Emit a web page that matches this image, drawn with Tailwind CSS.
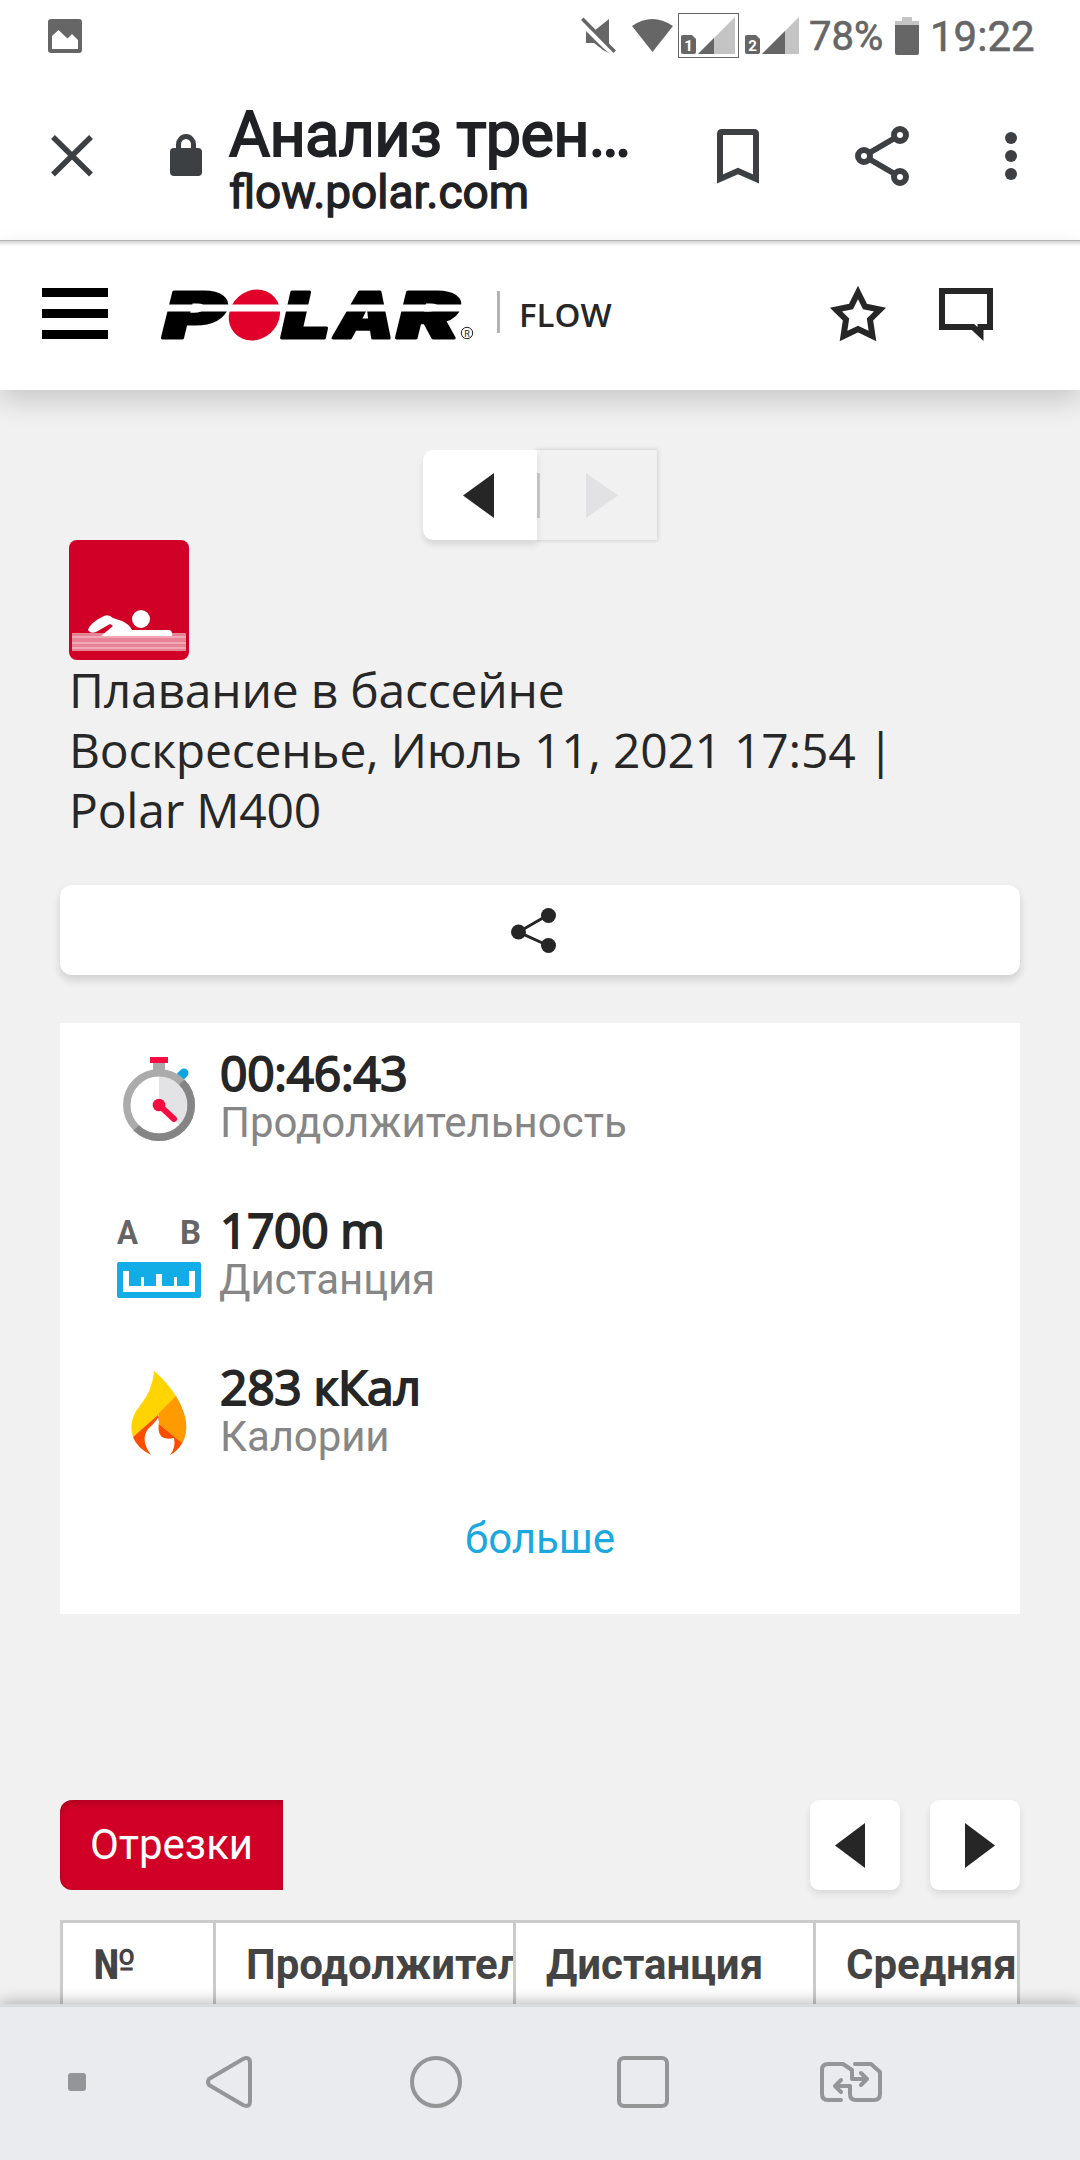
<!DOCTYPE html>
<html lang="ru">
<head>
<meta charset="utf-8">
<title>Анализ тренировки</title>
<script src="https://cdn.jsdelivr.net/npm/@tailwindcss/browser@4"></script>
</head>
<body class="bg-[#f1f1f1]">
<div class="flex h-[2160px] w-[1080px] flex-col overflow-hidden font-['Roboto',sans-serif]">

  <!-- Status bar -->
  <div class="flex h-[74px] shrink-0 items-center bg-white pl-12 text-[#666]">
    <svg class="h-[74px] w-[34px]" viewBox="48 0 34 74"><path fill="#666" fill-rule="evenodd" d="M51 19H79Q82 19 82 22V50Q82 53 79 53H51Q48 53 48 50V22Q48 19 51 19ZM52 36V49H78V40L72 34L67.500 38.500L58.500 30Z"/></svg>
    <svg class="ml-[498px] h-[74px] w-[222px]" viewBox="580 0 222 74">
      <g fill="#666">
        <path d="M609 19V46L594 31ZM586 31L602 47L609 53L603 50L594 43H586Z"/>
        <path d="M581 20L583.500 17.500L616 50.500L613.500 53Z"/>
        <path d="M632 26Q652 12 673 26L652.500 52Z"/>
        <rect x="678.500" y="13.500" width="60" height="44" fill="none" stroke="#666"/>
        <path d="M681 37Q681 35 683 35H692L696 39V52Q696 54 694 54H683Q681 54 681 52Z"/>
        <path d="M735 17V54H698Z" fill="#c4c4c4"/><path d="M698 54L714 38V54Z"/>
        <path d="M745 37Q745 35 747 35H756L760 39V52Q760 54 758 54H747Q745 54 745 52Z"/>
        <path d="M799 17V54H762Z" fill="#c4c4c4"/><path d="M762 54L785 31V54Z"/>
      </g>
      <g fill="#fff" font-family="Roboto" font-weight="700" font-size="15" text-anchor="middle"><text x="688.500" y="51">1</text><text x="752.500" y="51">2</text></g>
    </svg>
    <span class="ml-[7px] w-[79px] text-[40px] leading-[76px] [-webkit-text-stroke:0.6px]">78%</span>
    <svg class="ml-[7px] h-[74px] w-6" viewBox="895 0 24 74"><path fill="#c4c4c4" d="M902 17H912V21H919V26H895V21H902Z"/><path fill="#666" d="M895 25H919V53Q919 55 917 55H897Q895 55 895 53Z"/></svg>
    <span class="ml-[11px] text-[42px] leading-[76px] [-webkit-text-stroke:0.6px]">19:22</span>
  </div>

  <!-- Browser toolbar -->
  <div class="flex h-[166px] shrink-0 items-start bg-white pl-[51px] text-[#202124]">
    <svg class="h-[166px] w-[151px]" viewBox="51 74 151 166">
      <path d="M53 137L91 174.500M91 137L53 174.500" stroke="#3c4043" stroke-width="5.500" fill="none"/>
      <rect x="170" y="148" width="32" height="28" rx="4" fill="#3c4043"/><path d="M178.500 149V144.500A7.500 8 0 0 1 193.500 144.500V149" fill="none" stroke="#3c4043" stroke-width="5"/>
    </svg>
    <div class="ml-[27px] mt-[29px] w-[420px] [-webkit-text-stroke:1.8px]">
      <div class="text-[63px] leading-[64px] tracking-[-0.7px]">Анализ трен…</div>
      <div class="-mt-px text-[46px] leading-[52px] [-webkit-text-stroke:1.3px]">flow.polar.com</div>
    </div>
    <svg class="ml-[66px] h-[166px] w-[310px]" viewBox="715 74 310 166" fill="none" stroke="#3c4043">
      <path d="M720 179V134Q720 132 722 132H754Q756 132 756 134V179L738 171Z" stroke-width="6"/>
      <path d="M864 156L900 135M864 156L900 177" stroke-width="5.500"/>
      <g stroke-width="6" fill="#fff"><circle cx="864" cy="156" r="6"/><circle cx="900" cy="135" r="6"/><circle cx="900" cy="177" r="6"/></g>
      <g fill="#3c4043" stroke="none"><circle cx="1011" cy="138" r="6"/><circle cx="1011" cy="156" r="6"/><circle cx="1011" cy="174" r="6"/></g>
    </svg>
  </div>

  <!-- Site header -->
  <header class="relative flex h-[150px] shrink-0 items-center border-t border-[#b3b3b3] bg-white bg-linear-to-b from-[#d4d4d4] to-white to-[5px] pb-[4px] pl-[42px] shadow-[0_12px_24px_rgba(0,0,0,0.16)]">
    <svg class="h-[51px] w-[66px]" viewBox="0 0 66 51"><path d="M0 0H66V9H0ZM0 21H66V30H0ZM0 42H66V51H0Z"/></svg>
    <svg class="ml-[52px] h-[96px] w-[340px]" viewBox="160 266 340 96" role="img" aria-label="Polar">
      <g font-family="Inter" font-weight="900" font-style="italic" font-size="63" stroke="#000" stroke-width="3" stroke-linejoin="round">
        <text x="163" y="337.500" textLength="62" lengthAdjust="spacingAndGlyphs">P</text>
        <text x="282" y="337.500" textLength="48" lengthAdjust="spacingAndGlyphs">L</text>
        <text x="335" y="337.500" textLength="59" lengthAdjust="spacingAndGlyphs">A</text>
        <text x="397" y="337.500" textLength="62" lengthAdjust="spacingAndGlyphs">R</text>
      </g>
      <ellipse cx="254.500" cy="315" rx="25.500" ry="25.500" fill="#e0002a" transform="skewX(-6) translate(33 0)"/>
      <path fill="#fff" d="M160 304.500H475V311.500H160Z"/>
      <circle cx="467" cy="333" r="5.700" fill="none" stroke="#222"/>
      <text x="467" y="336.500" font-size="9" font-family="Roboto" text-anchor="middle" fill="#222">R</text>
      <path fill="#b3b3b3" d="M497 291H500V333H497Z"/>
    </svg>
    <span class="ml-[19px] w-[93px] pt-[3px] font-['Open_Sans'] text-[33px] font-semibold leading-[48px] text-[#272727]">FLOW</span>
    <svg class="ml-[215px] h-[60px] w-[168px]" viewBox="827 284 168 60" fill="none" stroke="#262626" stroke-width="6">
      <path d="M858 292.500L865 306.500L880 309.500L870 319.500L872.500 336L858 329L843.500 336L846 319.500L836 309.500L851 306.500Z"/>
      <path d="M942 291H990V327H980.500V334L973 327H942Z"/>
    </svg>
  </header>

  <!-- Page -->
  <main class="flex h-[1614px] shrink-0 flex-col overflow-hidden px-[60px] pt-[60px]">
    <div class="ml-[363px] flex h-[90px] w-[234px] shrink-0">
      <button class="relative z-10 flex w-[114px] items-center rounded-l-[10px] bg-white pl-10 shadow-[0_5px_6px_rgba(0,0,0,0.1)]"><svg class="h-[45px] w-[31px]" viewBox="0 0 31 45"><path fill="#262626" d="M0 22.500L31 0V45Z"/></svg></button>
      <button class="flex w-[120px] items-center bg-[#f1f1f1] shadow-[0_0_4px_1px_rgba(0,0,0,0.13)]"><span class="h-[45px] w-[3px] bg-[#c9c9c9]"></span><svg class="ml-[46px] h-[45px] w-[32px]" viewBox="0 0 32 45"><path fill="#e2e2e4" d="M0 0L32 22.500L0 45Z"/></svg></button>
    </div>

    <svg class="ml-[9px] h-[120px] w-[120px] shrink-0" viewBox="69 540 120 120">
      <rect x="69" y="540" width="120" height="120" rx="8" fill="#d10027"/>
      <path fill="#e78297" d="M72 633H186V651H72Z"/><path stroke="#f1b5c1" stroke-width="1.500" d="M72 637H186M72 643H186M72 648H186"/>
      <path fill="#fff" d="M88 630Q90 623 102 617Q108 613 113 618L122 621Q129 624 132 630H170Q173 632 172 636H101L113 626L110 624L96 632Q90 634 88 630Z"/>
      <ellipse cx="141" cy="619" rx="9" ry="9" fill="#fff"/>
    </svg>
    <h1 class="ml-[9px] font-['Open_Sans','Noto_Sans',sans-serif] text-[48px] leading-[60px] tracking-[-0.22px] text-[#272727]">Плавание в бассейне<br>Воскресенье, Июль 11, 2021 17:54 |<br>Polar M400</h1>

    <button class="mt-[45px] flex h-[90px] w-[960px] shrink-0 justify-center rounded-xl bg-white shadow-[0_5px_9px_rgba(0,0,0,0.14)]">
      <svg class="mr-[13px] h-[90px] w-[45px]" viewBox="511 885 45 90" fill="#262626"><path d="M548 915L518.500 932L548 945.500" fill="none" stroke="#262626" stroke-width="3"/><circle cx="518.500" cy="932" r="7.500"/><circle cx="548.500" cy="915.500" r="7.500"/><circle cx="548.500" cy="945.500" r="7.500"/></svg>
    </button>

    <section class="mt-12 flex h-[591px] shrink-0 flex-col gap-[57px] bg-white pl-[57px] pt-[25px]">
      <div class="flex h-[100px] shrink-0">
        <svg class="h-[100px] w-[84px]" viewBox="117 1048 84 100">
          <path fill="#f70d42" d="M150 1057H168V1063H150Z"/><path fill="#a9a9a9" d="M153 1063H165V1072H153Z"/>
          <path stroke="#0ba5e1" stroke-width="9" stroke-linecap="round" d="M184 1073L181 1076"/>
          <circle cx="159" cy="1105" r="32.200" fill="#fff"/><path fill="#e3e3e6" d="M159 1073A32 32 0 0 1 181.600 1127.600L159 1105Z"/>
          <circle cx="159" cy="1105" r="32.200" fill="none" stroke="#ababab" stroke-width="7.500"/>
          <path d="M181.800 1082.200A32.200 32.200 0 0 1 136.200 1127.800" fill="none" stroke="#858585" stroke-width="7.500"/>
          <circle cx="159" cy="1105" r="6.300" fill="#f70d42"/><path d="M159 1105L174 1119" stroke="#f70d42" stroke-width="6" stroke-linecap="round"/>
        </svg>
        <div class="ml-[19px]">
          <div class="font-['Open_Sans','Noto_Sans',sans-serif] text-[48px] leading-[50px] tracking-[-0.3px] text-[#262626] [-webkit-text-stroke:1.9px]">00:46:43</div>
          <div class="text-[42px] leading-[50px] text-[#868686]">Продолжительность</div>
        </div>
      </div>
      <div class="flex h-[100px] shrink-0">
        <svg class="h-[100px] w-[84px]" viewBox="117 1205 84 100">
          <g font-family="Roboto" font-weight="700" font-size="33" fill="#656565"><text x="117" y="1244" textLength="21" lengthAdjust="spacingAndGlyphs">A</text><text x="180" y="1244" textLength="21" lengthAdjust="spacingAndGlyphs">B</text></g>
          <rect x="117" y="1262" width="84" height="36" rx="2" fill="#12ace7"/>
          <path fill="#fff" d="M123 1271H129V1286H141V1277H144V1286H156V1274H162V1286H174V1277H177V1286H189V1271H195V1292H123Z"/>
        </svg>
        <div class="ml-[19px]">
          <div class="font-['Open_Sans','Noto_Sans',sans-serif] text-[48px] leading-[50px] tracking-[-0.4px] text-[#262626] [-webkit-text-stroke:1.9px]">1700 m</div>
          <div class="-ml-px text-[42px] leading-[50px] tracking-[-0.1px] text-[#868686]">Дистанция</div>
        </div>
      </div>
      <div class="flex h-[100px] shrink-0">
        <svg class="h-[100px] w-[84px]" viewBox="117 1362 84 100">
          <path fill="#ffd400" d="M154 1371Q167 1382 176 1396L159 1415L133 1437Q128 1421 139 1407Q153 1390 154 1371Z"/>
          <path fill="#ff9b00" d="M176 1396Q193 1424 182 1444L176 1438L159 1424V1415L158 1414Z"/>
          <path fill="#ff4d00" d="M158 1415L133 1437Q137 1448 151 1455Q140 1440 148 1429Q158 1420 159 1415C159 1427 157 1432 162 1437Q167 1440 174 1438Q176 1448 170 1455Q178 1451 182 1443L159 1424Z"/>
        </svg>
        <div class="ml-[19px]">
          <div class="font-['Open_Sans','Noto_Sans',sans-serif] text-[48px] leading-[50px] tracking-[-0.3px] text-[#262626] [-webkit-text-stroke:1.9px]">283 кКал</div>
          <div class="text-[42px] leading-[50px] tracking-[-0.1px] text-[#868686]">Калории</div>
        </div>
      </div>
      <a class="-mt-[5px] ml-[-57px] text-center text-[42px] leading-[50px] text-[#1ba8df]">больше</a>
    </section>

    <div class="mt-[186px] flex h-[90px] shrink-0 items-center">
      <button class="h-[90px] w-[223px] rounded-l-xl bg-[#d10027] text-[42px] leading-[90px] text-white shadow-[inset_0_3px_7px_rgba(0,0,0,0.18)]">Отрезки</button>
      <button class="ml-auto flex h-[90px] w-[90px] items-center rounded-[9px] bg-white pl-[25px] shadow-[0_4px_7px_rgba(0,0,0,0.1)]"><svg class="h-[45px] w-[30px]" viewBox="0 0 30 45"><path fill="#262626" d="M0 22.500L30 0V45Z"/></svg></button>
      <button class="ml-[30px] flex h-[90px] w-[90px] items-center rounded-[9px] bg-white pl-[35px] shadow-[0_4px_7px_rgba(0,0,0,0.1)]"><svg class="h-[45px] w-[30px]" viewBox="0 0 30 45"><path fill="#262626" d="M0 0L30 22.500L0 45Z"/></svg></button>
    </div>

    <div class="mt-[30px] grid h-[90px] w-[960px] shrink-0 grid-cols-[153px_300px_300px_207px] border-t-3 border-[#cbcbcb] bg-white text-[42px] font-bold leading-[83px] text-[#444]">
      <div class="overflow-hidden border-l-3 border-[#cbcbcb] pl-[30px]">№</div>
      <div class="overflow-hidden whitespace-nowrap border-l-3 border-[#cbcbcb] pl-[30px]">Продолжительность</div>
      <div class="overflow-hidden border-l-3 border-[#cbcbcb] pl-[30px]">Дистанция</div>
      <div class="overflow-hidden whitespace-nowrap border-x-3 border-[#cbcbcb] pl-[30px]">Средняя</div>
    </div>
  </main>

  <!-- System navigation -->
  <nav class="relative h-[156px] shrink-0 border-t-3 border-[#dadbdd] bg-[#e9ebef] shadow-[0_-2px_14px_rgba(0,0,0,0.28)]">
    <svg class="h-[153px] w-[1080px]" viewBox="0 2007 1080 153" fill="none" stroke="#949597" stroke-width="4" stroke-linejoin="round" stroke-linecap="round">
      <rect x="68" y="2073" width="18" height="18" rx="3" fill="#949597" stroke="none"/>
      <path d="M209 2079L243 2059Q250 2056 250 2063V2101Q250 2108 243 2105L209 2085Q207 2082 209 2079Z"/>
      <circle cx="436" cy="2082" r="24"/>
      <rect x="619" y="2058" width="48" height="48" rx="5"/>
      <path d="M841 2100H828Q822 2100 822 2094V2070Q822 2064 828 2064H843L852 2070V2079H867M861 2073L867 2079L861 2085"/>
      <path d="M855 2064H871L880 2072V2094Q880 2100 874 2100H856Q850 2100 850 2094V2086H835M841 2080L835 2086L841 2092"/>
    </svg>
  </nav>
</div>
</body>
</html>
